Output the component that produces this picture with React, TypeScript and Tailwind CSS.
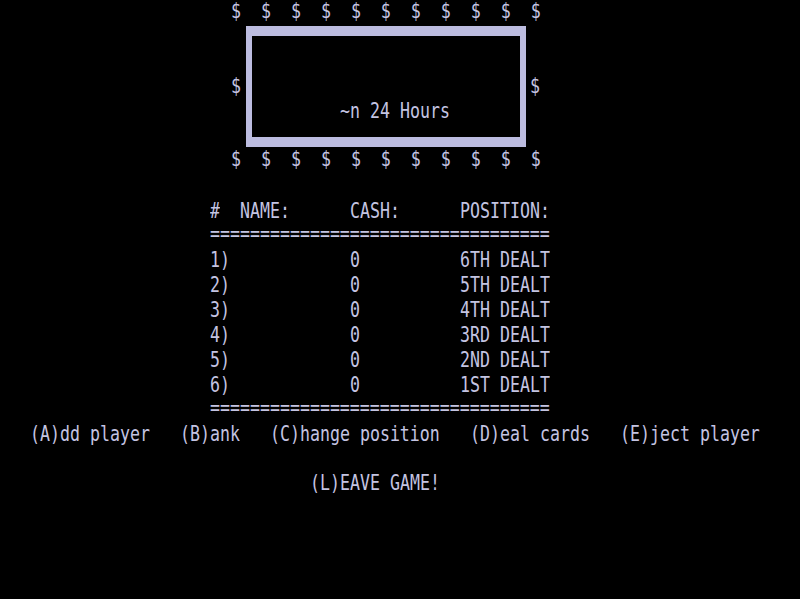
import React from "react";

const ROW = "h-[24.85px] whitespace-pre";

function T({ children, className = "", up = "mt-[1px]" }: { children: React.ReactNode; className?: string; up?: string }) {
  return (
    <span className={"block origin-top scale-y-[1.3] leading-[16px] whitespace-pre " + up + " " + className}>{children}</span>
  );
}

function Line({ children, className = "" }: { children?: React.ReactNode; className?: string }) {
  return <div className={ROW + " flex " + className}>{children}</div>;
}

const dollars = "$  $  $  $  $  $  $  $  $  $  $";

const rows = [
  ["1)", "0", "6TH DEALT"],
  ["2)", "0", "5TH DEALT"],
  ["3)", "0", "4TH DEALT"],
  ["4)", "0", "3RD DEALT"],
  ["5)", "0", "2ND DEALT"],
  ["6)", "0", "1ST DEALT"],
];

const eq = "=".repeat(34);

export default function App() {
  return (
    <div
      className="w-[800px] h-[599px] bg-black text-[#c4c4e2] text-[16.6px] overflow-hidden"
      style={{ fontFamily: '"DejaVu Sans Mono", "Liberation Mono", monospace' }}
    >
      <div className="pt-[1px]">
        <Line className="pl-[231px]">
          <T up="mt-0">{dollars}</T>
        </Line>
        <div className="flex h-[124.25px] pl-[231px]">
          <div className="w-[10px] pt-[51px]">
            <T up="-mt-[1px]">$</T>
          </div>
          <div className="ml-[5px] w-[280px] h-[121px] border-x-[6px] border-y-[10px] border-[#bcbce0] pl-[88px] pt-[62px]">
            <T up="mt-[3px]">~n 24 Hours</T>
          </div>
          <div className="ml-[4px] w-[10px] pt-[51px]">
            <T up="-mt-[1px]">$</T>
          </div>
        </div>
        <Line className="pl-[231px]">
          <T up="-mt-[1px]">{dollars}</T>
        </Line>
        <Line />
        <Line className="pl-[210px]">
          <div className="w-[30px]"><T>#</T></div>
          <div className="w-[110px]"><T>NAME:</T></div>
          <div className="w-[110px]"><T>CASH:</T></div>
          <div><T>POSITION:</T></div>
        </Line>
        <Line className="pl-[210px]">
          <T up="-mt-[1px]">{eq}</T>
        </Line>
        {rows.map((r) => (
          <Line key={r[0]} className="pl-[210px]">
            <div className="w-[140px]"><T>{r[0]}</T></div>
            <div className="w-[110px]"><T>{r[1]}</T></div>
            <div><T>{r[2]}</T></div>
          </Line>
        ))}
        <Line className="pl-[210px]">
          <T up="-mt-[1px]">{eq}</T>
        </Line>
        <Line className="pl-[30px]">
          <div className="w-[150px]"><T>(A)dd player</T></div>
          <div className="w-[90px]"><T>(B)ank</T></div>
          <div className="w-[200px]"><T>(C)hange position</T></div>
          <div className="w-[150px]"><T>(D)eal cards</T></div>
          <div><T>(E)ject player</T></div>
        </Line>
        <Line />
        <Line className="pl-[310px]">
          <T up="mt-0">(L)EAVE GAME!</T>
        </Line>
      </div>
    </div>
  );
}
